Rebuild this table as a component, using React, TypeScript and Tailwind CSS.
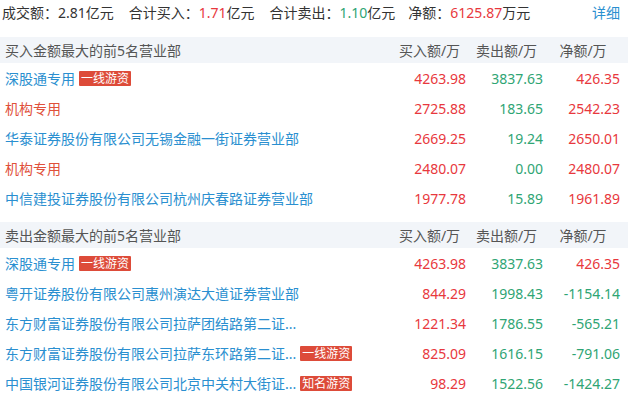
import React from "react";

type Row = {
  name: string;
  tag?: string;
  org?: boolean;
  buy: string;
  sell: string;
  net: string;
};

const buyRows: Row[] = [
  { name: "深股通专用", tag: "一线游资", buy: "4263.98", sell: "3837.63", net: "426.35" },
  { name: "机构专用", org: true, buy: "2725.88", sell: "183.65", net: "2542.23" },
  { name: "华泰证券股份有限公司无锡金融一街证券营业部", buy: "2669.25", sell: "19.24", net: "2650.01" },
  { name: "机构专用", org: true, buy: "2480.07", sell: "0.00", net: "2480.07" },
  { name: "中信建投证券股份有限公司杭州庆春路证券营业部", buy: "1977.78", sell: "15.89", net: "1961.89" },
];

const sellRows: Row[] = [
  { name: "深股通专用", tag: "一线游资", buy: "4263.98", sell: "3837.63", net: "426.35" },
  { name: "粤开证券股份有限公司惠州演达大道证券营业部", buy: "844.29", sell: "1998.43", net: "-1154.14" },
  { name: "东方财富证券股份有限公司拉萨团结路第二证...", buy: "1221.34", sell: "1786.55", net: "-565.21" },
  { name: "东方财富证券股份有限公司拉萨东环路第二证...", tag: "一线游资", buy: "825.09", sell: "1616.15", net: "-791.06" },
  { name: "中国银河证券股份有限公司北京中关村大街证...", tag: "知名游资", buy: "98.29", sell: "1522.56", net: "-1424.27" },
];

function Section({ title, rows }: { title: string; rows: Row[] }) {
  return (
    <div>
      <div className="flex items-center h-[26px] bg-[#f2f5f9] text-[#555] pl-[5px] pr-[8px]">
        <div className="flex-1">{title}</div>
        <div className="w-[77px] text-center pl-[4px]">买入额/万</div>
        <div className="w-[77px] text-center pl-[4px]">卖出额/万</div>
        <div className="w-[77px] text-center pl-[3px]">净额/万</div>
      </div>
      {rows.map((r, i) => (
        <div key={i} className="flex items-center h-[30px] pl-[5px] pr-[8px]">
          <div className="flex-1 flex items-center whitespace-nowrap">
            <span className={r.org ? "text-[#e0503a]" : "text-[#2a8fd0]"}>{r.name}</span>
            {r.tag && (
              <span className="ml-[4px] bg-[#dd4b39] text-white text-[12px] leading-[15px] h-[15px] px-[2px] rounded-[1px]">
                {r.tag}
              </span>
            )}
          </div>
          <div className="w-[77px] text-right text-[#e8383d]">{r.buy}</div>
          <div className="w-[77px] text-right text-[#2fa574]">{r.sell}</div>
          <div
            className={
              "w-[77px] text-right " +
              (r.net.startsWith("-") ? "text-[#2fa574]" : "text-[#e8383d]")
            }
          >
            {r.net}
          </div>
        </div>
      ))}
    </div>
  );
}

export default function App() {
  return (
    <div className="w-[628px] h-[397px] overflow-hidden bg-white text-[14px] text-[#333] font-['Noto_Sans','Noto_Sans_CJK_SC',sans-serif]">
      <div className="flex items-center h-[25px] pl-[2px] pr-[8px]">
        <span>成交额：2.81亿元</span>
        <span className="ml-[15px]">
          合计买入：<span className="text-[#e8383d]">1.71</span>亿元
        </span>
        <span className="ml-[15px]">
          合计卖出：<span className="text-[#2fa574]">1.10</span>亿元
        </span>
        <span className="ml-[13px]">
          净额：<span className="text-[#e8383d]">6125.87</span>万元
        </span>
        <span className="ml-auto text-[#2a8fd0]">详细</span>
      </div>
      <div className="mt-[12px]">
        <Section title="买入金额最大的前5名营业部" rows={buyRows} />
      </div>
      <div className="mt-[9px]">
        <Section title="卖出金额最大的前5名营业部" rows={sellRows} />
      </div>
    </div>
  );
}
